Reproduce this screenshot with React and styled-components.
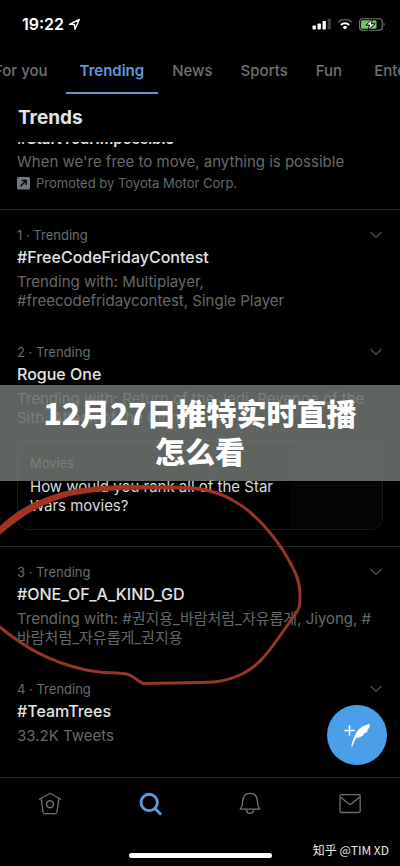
import React from "react";
import styled, { createGlobalStyle } from "styled-components";

const GlobalStyle = createGlobalStyle`
  * { box-sizing: border-box; }
  body {
    margin: 0;
    background: #000;
    color: #e4e4e4;
    font-family: Inter, "Noto Sans CJK KR", "Noto Sans CJK SC", sans-serif;
  }
  h1, h2, h3, p { margin: 0; }
  button { background: none; border: 0; padding: 0; font: inherit; color: inherit; cursor: pointer; }
`;

const Page = styled.div`
  min-height: 100vh;
  display: flex;
  flex-direction: column;
  background: #000;
  overflow: hidden;
`;

const StatusBar = styled.header`
  display: flex;
  align-items: center;
  justify-content: space-between;
  height: 48px;
  padding: 0 14px 0 22px;
`;

const Clock = styled.div`
  display: flex;
  align-items: center;
  gap: 4px;
  color: #fff;
  font-size: 16px;
  font-weight: 600;
`;

const StatusIcons = styled.div`
  display: flex;
  align-items: center;
  gap: 6px;
`;

const Tabs = styled.nav`
  display: flex;
  height: 46px;
  margin-left: -24px;
`;

const Tab = styled.a`
  flex: none;
  padding: 0 14px;
  border-bottom: 2px solid ${(p) => (p.$active ? "#5b9bd9" : "transparent")};
  color: ${(p) => (p.$active ? "#5b9bd9" : "#6e7275")};
  font-size: 15px;
  font-weight: ${(p) => (p.$active ? 600 : 500)};
  line-height: 46px;
  text-decoration: none;

  &:first-child,
  &:last-child {
    padding: 0 18px;
  }
`;

const SectionTitle = styled.h1`
  height: 48px;
  padding: 0 18px;
  font-size: 19px;
  font-weight: 700;
  line-height: 48px;
`;

const Feed = styled.main`
  position: relative;
  flex: 1;
  overflow: hidden;
  padding-bottom: 15px;
`;

const Promoted = styled.article`
  margin-top: -14px;
  padding: 0 17px 16px;
  border-bottom: 1px solid #242424;
`;

const Trend = styled.article`
  padding: 16px 17px ${(p) => (p.$divided ? 16 : 17)}px;
  border-bottom: ${(p) => (p.$divided ? "1px solid #242424" : "0")};
`;

const MetaRow = styled.div`
  display: flex;
  align-items: center;
  justify-content: space-between;
  height: 18px;
  margin-bottom: 2px;
  color: #6a6d70;
  font-size: 13px;
`;

const Headline = styled.h2`
  margin-bottom: ${(p) => (p.$tight ? 2 : 4)}px;
  font-size: ${(p) => (p.$tight ? 15 : 16)}px;
  font-weight: ${(p) => (p.$tight ? 600 : 500)};
  line-height: 22px;
`;

const Detail = styled.p`
  padding-right: 6px;
  color: #65696c;
  font-size: 15px;
  line-height: 19px;
`;

const Sponsor = styled.p`
  display: flex;
  align-items: center;
  gap: 6px;
  margin-top: 3px;
  color: #65696c;
  font-size: 13px;
  line-height: 19px;
`;

const ChevronButton = styled.button`
  display: flex;
`;

const Card = styled.a`
  display: grid;
  grid-template-columns: 3fr 1fr;
  margin-top: 13px;
  border: 1px solid #17191a;
  border-radius: 12px;
  overflow: hidden;
  color: #dcdcdc;
  text-decoration: none;
`;

const CardText = styled.div`
  padding: 13px 8px 14px 12px;
  font-size: 15px;
  line-height: 19px;
`;

const CardTopic = styled.p`
  margin-bottom: 4px;
  color: #65696c;
  font-size: 13px;
`;

const CardThumb = styled.div`
  background: #050406;
`;

const InkCircle = styled.svg`
  position: absolute;
  top: 0;
  left: 0;
`;

const Banner = styled.div`
  position: absolute;
  top: 243px;
  left: 0;
  right: 0;
  padding: 8px 40px 12px;
  background: rgba(128, 133, 128, 0.75);
  color: #fff;
  font-family: "Noto Sans CJK SC", sans-serif;
  font-size: 30px;
  font-weight: 900;
  line-height: 38px;
  text-align: center;
`;

const ComposeButton = styled.button`
  position: absolute;
  right: 13px;
  bottom: 12px;
  display: flex;
  width: 60px;
  height: 60px;
  border-radius: 50%;
  && { background: #4b9ee8; }
`;

const BottomNav = styled.nav`
  display: grid;
  grid-template-columns: repeat(4, 1fr);
  justify-items: center;
  padding: 13px 0 14px;
  border-top: 1px solid #202020;
`;

const NavButton = styled.button`
  display: flex;
  && { color: ${(p) => (p.$active ? "#5b9bd9" : "#6e7275")}; }
`;

const Footer = styled.footer`
  display: grid;
  grid-template-columns: 1fr 143px 1fr;
  align-items: center;
  height: 36px;
  padding-right: 11px;
  padding-left: 11px;
`;

const HomeIndicator = styled.div`
  grid-column: 2;
  align-self: end;
  height: 5px;
  margin-bottom: 9px;
  border-radius: 3px;
  background: #fff;
`;

const Credit = styled.small`
  justify-self: end;
  color: #e8e8e8;
  font-family: "Noto Sans CJK SC", sans-serif;
  font-size: 12px;
  white-space: nowrap;
`;

const LocationArrow = () => (
  <svg width="13" height="13" viewBox="0 0 13 13" fill="none" stroke="#fff" strokeWidth="1.4" strokeLinejoin="round">
    <path d="M1.5 6.4 11.3 1.5 7 11.3 6.4 6.5Z" />
  </svg>
);

const Signal = () => (
  <svg width="19" height="12" viewBox="0 0 19 12" fill="#fff">
    <rect x="0.500" y="7.5" width="3.4" height="4" rx="0.8" />
    <rect x="5.500" y="5.5" width="3.4" height="6" rx="0.8" />
    <rect x="10.500" y="3" width="3.4" height="8.5" rx="0.8" />
    <rect x="15.500" y="0.5" width="3.4" height="11" rx="0.8" fill="#3c3c3e" />
  </svg>
);

const Wifi = () => (
  <svg width="16" height="12" viewBox="0 0 16 12" fill="none">
    <path d="M1.2 4.2a9.8 9.8 0 0 1 13.6 0" stroke="#4a4a4c" strokeWidth="2" />
    <path d="M3.9 6.9a5.9 5.9 0 0 1 8.2 0" stroke="#fff" strokeWidth="2.1" />
    <path d="m8 11.6-2.4-2.4a3.4 3.4 0 0 1 4.8 0Z" fill="#fff" />
  </svg>
);

const Battery = () => (
  <svg width="27" height="13" viewBox="0 0 27 13">
    <rect x="0.6" y="0.8" width="22.6" height="11.4" rx="3" fill="none" stroke="#77797a" strokeWidth="1.1" />
    <path d="M24.6 4.6c1.4.5 1.4 3.3 0 3.8Z" fill="#77797a" />
    <rect x="2" y="2.2" width="15.5" height="8.6" rx="1.6" fill="#66c766" />
    <path d="M13.6.8 7 7.1h3.6L9 12.3l7.2-6.5h-3.8Z" fill="#fff" stroke="#000" strokeWidth="1" />
  </svg>
);

const Chevron = () => (
  <svg width="14" height="8" viewBox="0 0 14 8" fill="none" stroke="#4c4f51" strokeWidth="1.2">
    <path d="m1.5 1 5.5 5.5L12.5 1" />
  </svg>
);

const PromotedMark = () => (
  <svg width="13" height="13" viewBox="0 0 13 13">
    <rect width="13" height="12.5" rx="1.5" fill="#70767b" />
    <path d="m3.5 9.2 5.4-5.4M4.8 3.5h4.4v4.4" fill="none" stroke="#000" strokeWidth="1.4" />
  </svg>
);

const Feather = () => (
  <svg width="60" height="60" viewBox="0 0 60 60">
    <path d="M22.5 20.3v10.400M17.300 25.500h10.400" stroke="#fff" strokeWidth="1.5" fill="none" />
    <path
      d="M43 19C37.500 20 32.500 22.800 30 26.500 27.500 30.300 25.600 35.500 24.300 41.300L25.300 41.700C26.300 38.500 27.800 35.300 29.700 32.700 32.500 32.400 35.500 31.600 37.300 29.200L35 29.200C38 28.500 40 27.500 41.300 25.600L39.300 25.600C41.800 24.300 42.800 22 43 19Z"
      fill="#fff"
    />
  </svg>
);

const HomeIcon = () => (
  <svg width="26" height="26" viewBox="0 0 26 26" fill="none" stroke="currentColor" strokeWidth="1.3" strokeLinecap="round" strokeLinejoin="round">
    <path d="M2.2 8.2 13 2.2l10.8 6" />
    <path d="M4.2 7.5 6 21c.2 1.2.8 1.7 1.9 1.7h10.200c1.1 0 1.7-.5 1.9-1.7l1.8-13.5" />
    <circle cx="13" cy="13.2" r="3.5" strokeWidth="1.5" />
  </svg>
);

const SearchIcon = () => (
  <svg width="26" height="26" viewBox="0 0 26 26" fill="none" stroke="currentColor" strokeLinecap="round">
    <circle cx="12.2" cy="11.5" r="8.2" strokeWidth="2.9" />
    <path d="m18 17.5 5.2 5.2" strokeWidth="3" />
  </svg>
);

const BellIcon = () => (
  <svg width="26" height="26" viewBox="0 0 26 26" fill="none" stroke="currentColor" strokeWidth="1.3" strokeLinejoin="round">
    <path d="M3.2 18.2c1.6-1.7 2.3-4 2.4-7.2C5.7 5.3 8.6 2.4 13 2.4s7.3 2.9 7.4 8.6c.1 3.2.8 5.5 2.4 7.2Z" />
    <path d="M9.4 18.4c.2 2.7 1.6 4 3.6 4s3.4-1.3 3.6-4" />
  </svg>
);

const MailIcon = () => (
  <svg width="26" height="26" viewBox="0 0 26 26" fill="none" stroke="currentColor" strokeWidth="1.3" strokeLinejoin="round">
    <rect x="3" y="3.7" width="20.2" height="17.8" rx="1.5" />
    <path d="m3.3 6 8.7 6.9c.7.5 1.4.5 2.1 0L22.9 6" />
  </svg>
);

const tabs = ["For you", "Trending", "News", "Sports", "Fun", "Entertainment"];

const trends = [
  { name: "#FreeCodeFridayContest", detail: "Trending with: Multiplayer, #freecodefridaycontest, Single Player" },
  {
    name: "Rogue One",
    detail: "Trending with: Return of the Jedi, Revenge of the Sith, Attack of the Clones",
    card: { topic: "Movies", question: "How would you rank all of the Star Wars movies?" },
  },
  { name: "#ONE_OF_A_KIND_GD", detail: "Trending with: #권지용_바람처럼_자유롭게, Jiyong, #바람처럼_자유롭게_권지용" },
  { name: "#TeamTrees", detail: "33.2K Tweets" },
];

const navItems = [
  { label: "Home", Icon: HomeIcon },
  { label: "Search", Icon: SearchIcon, active: true },
  { label: "Notifications", Icon: BellIcon },
  { label: "Messages", Icon: MailIcon },
];

function TrendItem({ rank, trend }) {
  return (
    <Trend $divided={Boolean(trend.card)}>
      <MetaRow>
        <span>{rank} · Trending</span>
        <ChevronButton aria-label={`Options for ${trend.name}`}>
          <Chevron />
        </ChevronButton>
      </MetaRow>
      <Headline>{trend.name}</Headline>
      <Detail>{trend.detail}</Detail>
      {trend.card && (
        <Card href="#movies">
          <CardText>
            <CardTopic>{trend.card.topic}</CardTopic>
            <p>{trend.card.question}</p>
          </CardText>
          <CardThumb />
        </Card>
      )}
    </Trend>
  );
}

export default function App() {
  return (
    <Page>
      <GlobalStyle />
      <StatusBar>
        <Clock>
          19:22
          <LocationArrow />
        </Clock>
        <StatusIcons>
          <Signal />
          <Wifi />
          <Battery />
        </StatusIcons>
      </StatusBar>
      <Tabs>
        {tabs.map((name) => (
          <Tab key={name} href={`#${name}`} $active={name === "Trending"}>
            {name}
          </Tab>
        ))}
      </Tabs>
      <SectionTitle>Trends</SectionTitle>
      <Feed>
        <Promoted>
          <Headline $tight>#StartYourImpossible</Headline>
          <Detail>When we're free to move, anything is possible</Detail>
          <Sponsor>
            <PromotedMark />
            Promoted by Toyota Motor Corp.
          </Sponsor>
        </Promoted>
        {trends.map((trend, i) => (
          <TrendItem key={trend.name} rank={i + 1} trend={trend} />
        ))}
        <InkCircle width="310" height="560" viewBox="0 142 310 560" pointerEvents="none">
          <path
            d="M-4 530C12 513 32 501 62 492 100 483 140 485 167 485.5 195 485 215 488 234 499L232.5 502C214 491 197 489.5 167 489.5 140 489.5 104 489 70 496 40 504 22 516-4 538Z"
            fill="#a33423"
          />
          <path
            d="M233 500.5C254 511 276 538 287 557 295 571 300 580 300 597 300 605 300 608 294 616L277 640C267 654 257 667 242 674 225 682 215 682 200 682.5L143 683.5C136 681 134 675 126 674 112 672 104 674 84 669.5 50 662 25 648-4 624"
            fill="none"
            stroke="#943629"
            strokeWidth="3"
          />
        </InkCircle>
        <Banner>12月27日推特实时直播怎么看</Banner>
        <ComposeButton aria-label="Compose">
          <Feather />
        </ComposeButton>
      </Feed>
      <BottomNav>
        {navItems.map(({ label, Icon, active }) => (
          <NavButton key={label} aria-label={label} $active={active}>
            <Icon />
          </NavButton>
        ))}
      </BottomNav>
      <Footer>
        <HomeIndicator />
        <Credit>知乎 @TIM XD</Credit>
      </Footer>
    </Page>
  );
}
